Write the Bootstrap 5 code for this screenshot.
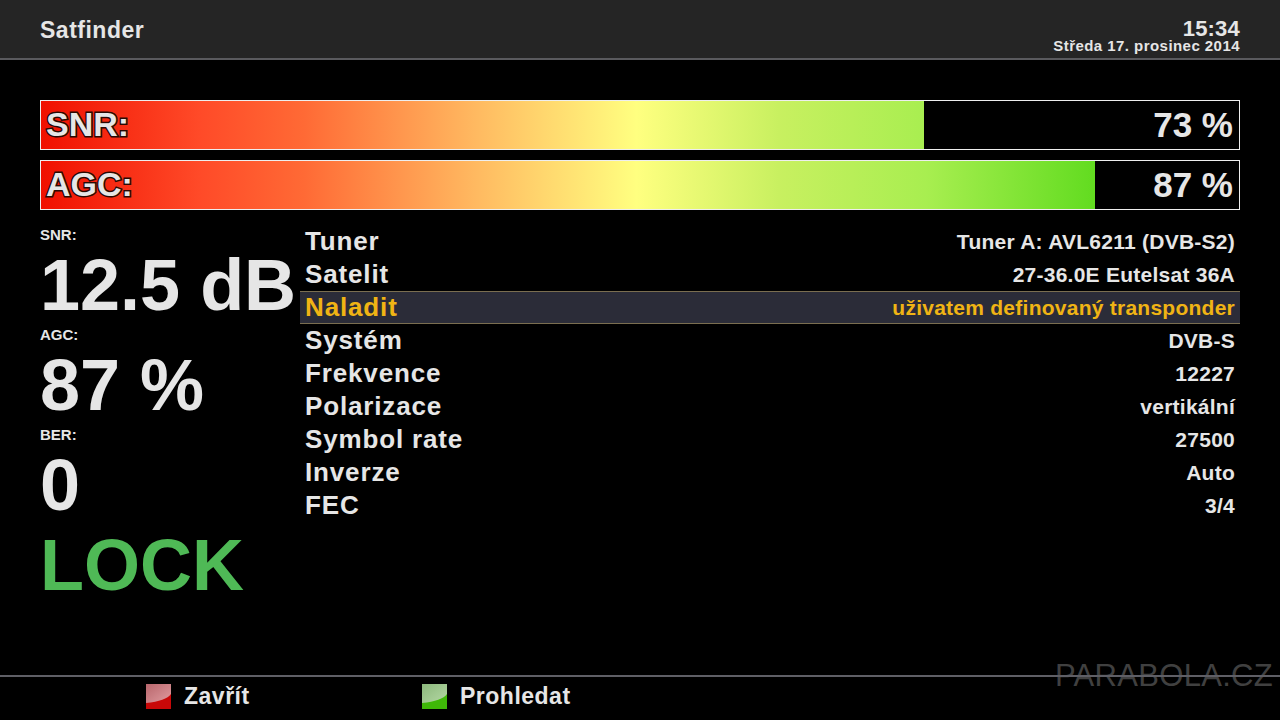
<!DOCTYPE html>
<html lang="cs">
<head>
<meta charset="utf-8">
<title>Satfinder</title>
<link href="https://cdn.jsdelivr.net/npm/bootstrap@5.3.0/dist/css/bootstrap.min.css" rel="stylesheet">
<style>
html,body{height:100%;background:#000;overflow:hidden}
body{font-family:"Liberation Sans",Arial,sans-serif;font-weight:700;color:#e6e6e6;height:720px;width:1280px;position:relative}
.top-bar{height:60px;background:#252525;border-bottom:2px solid #5a5a5e;padding:0 40px}
.top-title{font-size:23px;letter-spacing:.5px;padding-top:3px}
.top-clock{font-size:22px;line-height:21px;letter-spacing:.2px;padding-top:18px}
.top-date{font-size:15px;line-height:14px;letter-spacing:.45px}
.work{height:615px;padding:40px 40px 0}
.meter{height:50px;border:1px solid #eee;margin-bottom:10px;position:relative;background:#000}
.meter-fill{height:100%;background:linear-gradient(90deg,#f01000 0,#ff4a28 15%,#ff6a35 25%,#ffb860 41%,#ffff80 56.5%,#c8f060 70%,#a8ee50 84%,#62dc20 100%);background-size:1054px 100%;background-repeat:no-repeat}
.meter-name{position:absolute;left:5px;top:-1px;line-height:48px;font-size:34px;-webkit-text-stroke:3px #2a0a04;paint-order:stroke fill;color:#e6e6e6}
.meter-val{position:absolute;right:6px;top:0;line-height:48px;font-size:35px}
.panes{padding-top:5px}
.stats{width:260px;white-space:nowrap}
.stat-label{font-size:15px;line-height:20px}
.stat-big{font-size:72px;line-height:80px}
.stat-lock{color:#4fb956}
.tune{width:940px}
.tune-row{height:33px;padding:0 5px;font-size:26px;letter-spacing:.85px}
.tune-val{font-size:21px;letter-spacing:.25px}
.tune-on{background:#2b2c38;border-top:1px solid #7a6e50;border-bottom:1px solid #7a6e50;color:#f0b414}
.bottom-bar{height:45px;border-top:2px solid #5f5f66;padding-bottom:5px;position:relative;z-index:1}
.key-item{font-size:23px;letter-spacing:.5px}
.key-red{margin-left:146px;width:276px}
.key-swatch{width:25px;height:25px;margin-right:13px;display:block}
.mark-site{position:absolute;right:7px;top:653px;font-size:31px;font-weight:400;color:#404040;letter-spacing:.3px}
</style>
</head>
<body>
<header class="top-bar d-flex justify-content-between align-items-center">
<div class="top-title">Satfinder</div>
<div class="text-end align-self-start"><div class="top-clock">15:34</div><div class="top-date">Středa 17. prosinec 2014</div></div>
</header>
<main class="work">
<div class="meter"><div class="meter-fill" style="width:73.7%"></div><span class="meter-name">SNR:</span><span class="meter-val">73 %</span></div>
<div class="meter"><div class="meter-fill" style="width:88%"></div><span class="meter-name">AGC:</span><span class="meter-val">87 %</span></div>
<div class="panes d-flex">
<section class="stats">
<div class="stat-label">SNR:</div><div class="stat-big">12.5 dB</div>
<div class="stat-label">AGC:</div><div class="stat-big">87 %</div>
<div class="stat-label">BER:</div><div class="stat-big">0</div>
<div class="stat-big stat-lock">LOCK</div>
</section>
<section class="tune">
<div class="tune-row d-flex justify-content-between align-items-center"><span>Tuner</span><span class="tune-val">Tuner A: AVL6211 (DVB-S2)</span></div>
<div class="tune-row d-flex justify-content-between align-items-center"><span>Satelit</span><span class="tune-val">27-36.0E Eutelsat 36A</span></div>
<div class="tune-row tune-on d-flex justify-content-between align-items-center"><span>Naladit</span><span class="tune-val">uživatem definovaný transponder</span></div>
<div class="tune-row d-flex justify-content-between align-items-center"><span>Systém</span><span class="tune-val">DVB-S</span></div>
<div class="tune-row d-flex justify-content-between align-items-center"><span>Frekvence</span><span class="tune-val">12227</span></div>
<div class="tune-row d-flex justify-content-between align-items-center"><span>Polarizace</span><span class="tune-val">vertikální</span></div>
<div class="tune-row d-flex justify-content-between align-items-center"><span>Symbol rate</span><span class="tune-val">27500</span></div>
<div class="tune-row d-flex justify-content-between align-items-center"><span>Inverze</span><span class="tune-val">Auto</span></div>
<div class="tune-row d-flex justify-content-between align-items-center"><span>FEC</span><span class="tune-val">3/4</span></div>
</section>
</div>
</main>
<footer class="bottom-bar d-flex align-items-center">
<div class="key-item key-red d-flex align-items-center">
<svg class="key-swatch" viewBox="0 0 25 25"><defs><linearGradient id="gr" x1="0" y1="0" x2="1" y2="1"><stop offset="0" stop-color="#b8666c"/><stop offset="1" stop-color="#e09ca0"/></linearGradient></defs><rect width="25" height="25" fill="#c80808"/><path d="M0 0H25V10Q20 17 0 19Z" fill="url(#gr)"/></svg>Zavřít</div>
<div class="key-item d-flex align-items-center">
<svg class="key-swatch" viewBox="0 0 25 25"><defs><linearGradient id="gg" x1="0" y1="0" x2="1" y2="1"><stop offset="0" stop-color="#8cb87c"/><stop offset="1" stop-color="#b4d8a4"/></linearGradient></defs><rect width="25" height="25" fill="#3fb808"/><path d="M0 0H25V10Q20 17 0 19Z" fill="url(#gg)"/></svg>Prohledat</div>
</footer>
<div class="mark-site">PARABOLA.CZ</div>
<script src="https://cdn.jsdelivr.net/npm/bootstrap@5.3.0/dist/js/bootstrap.bundle.min.js"></script>
</body>
</html>
